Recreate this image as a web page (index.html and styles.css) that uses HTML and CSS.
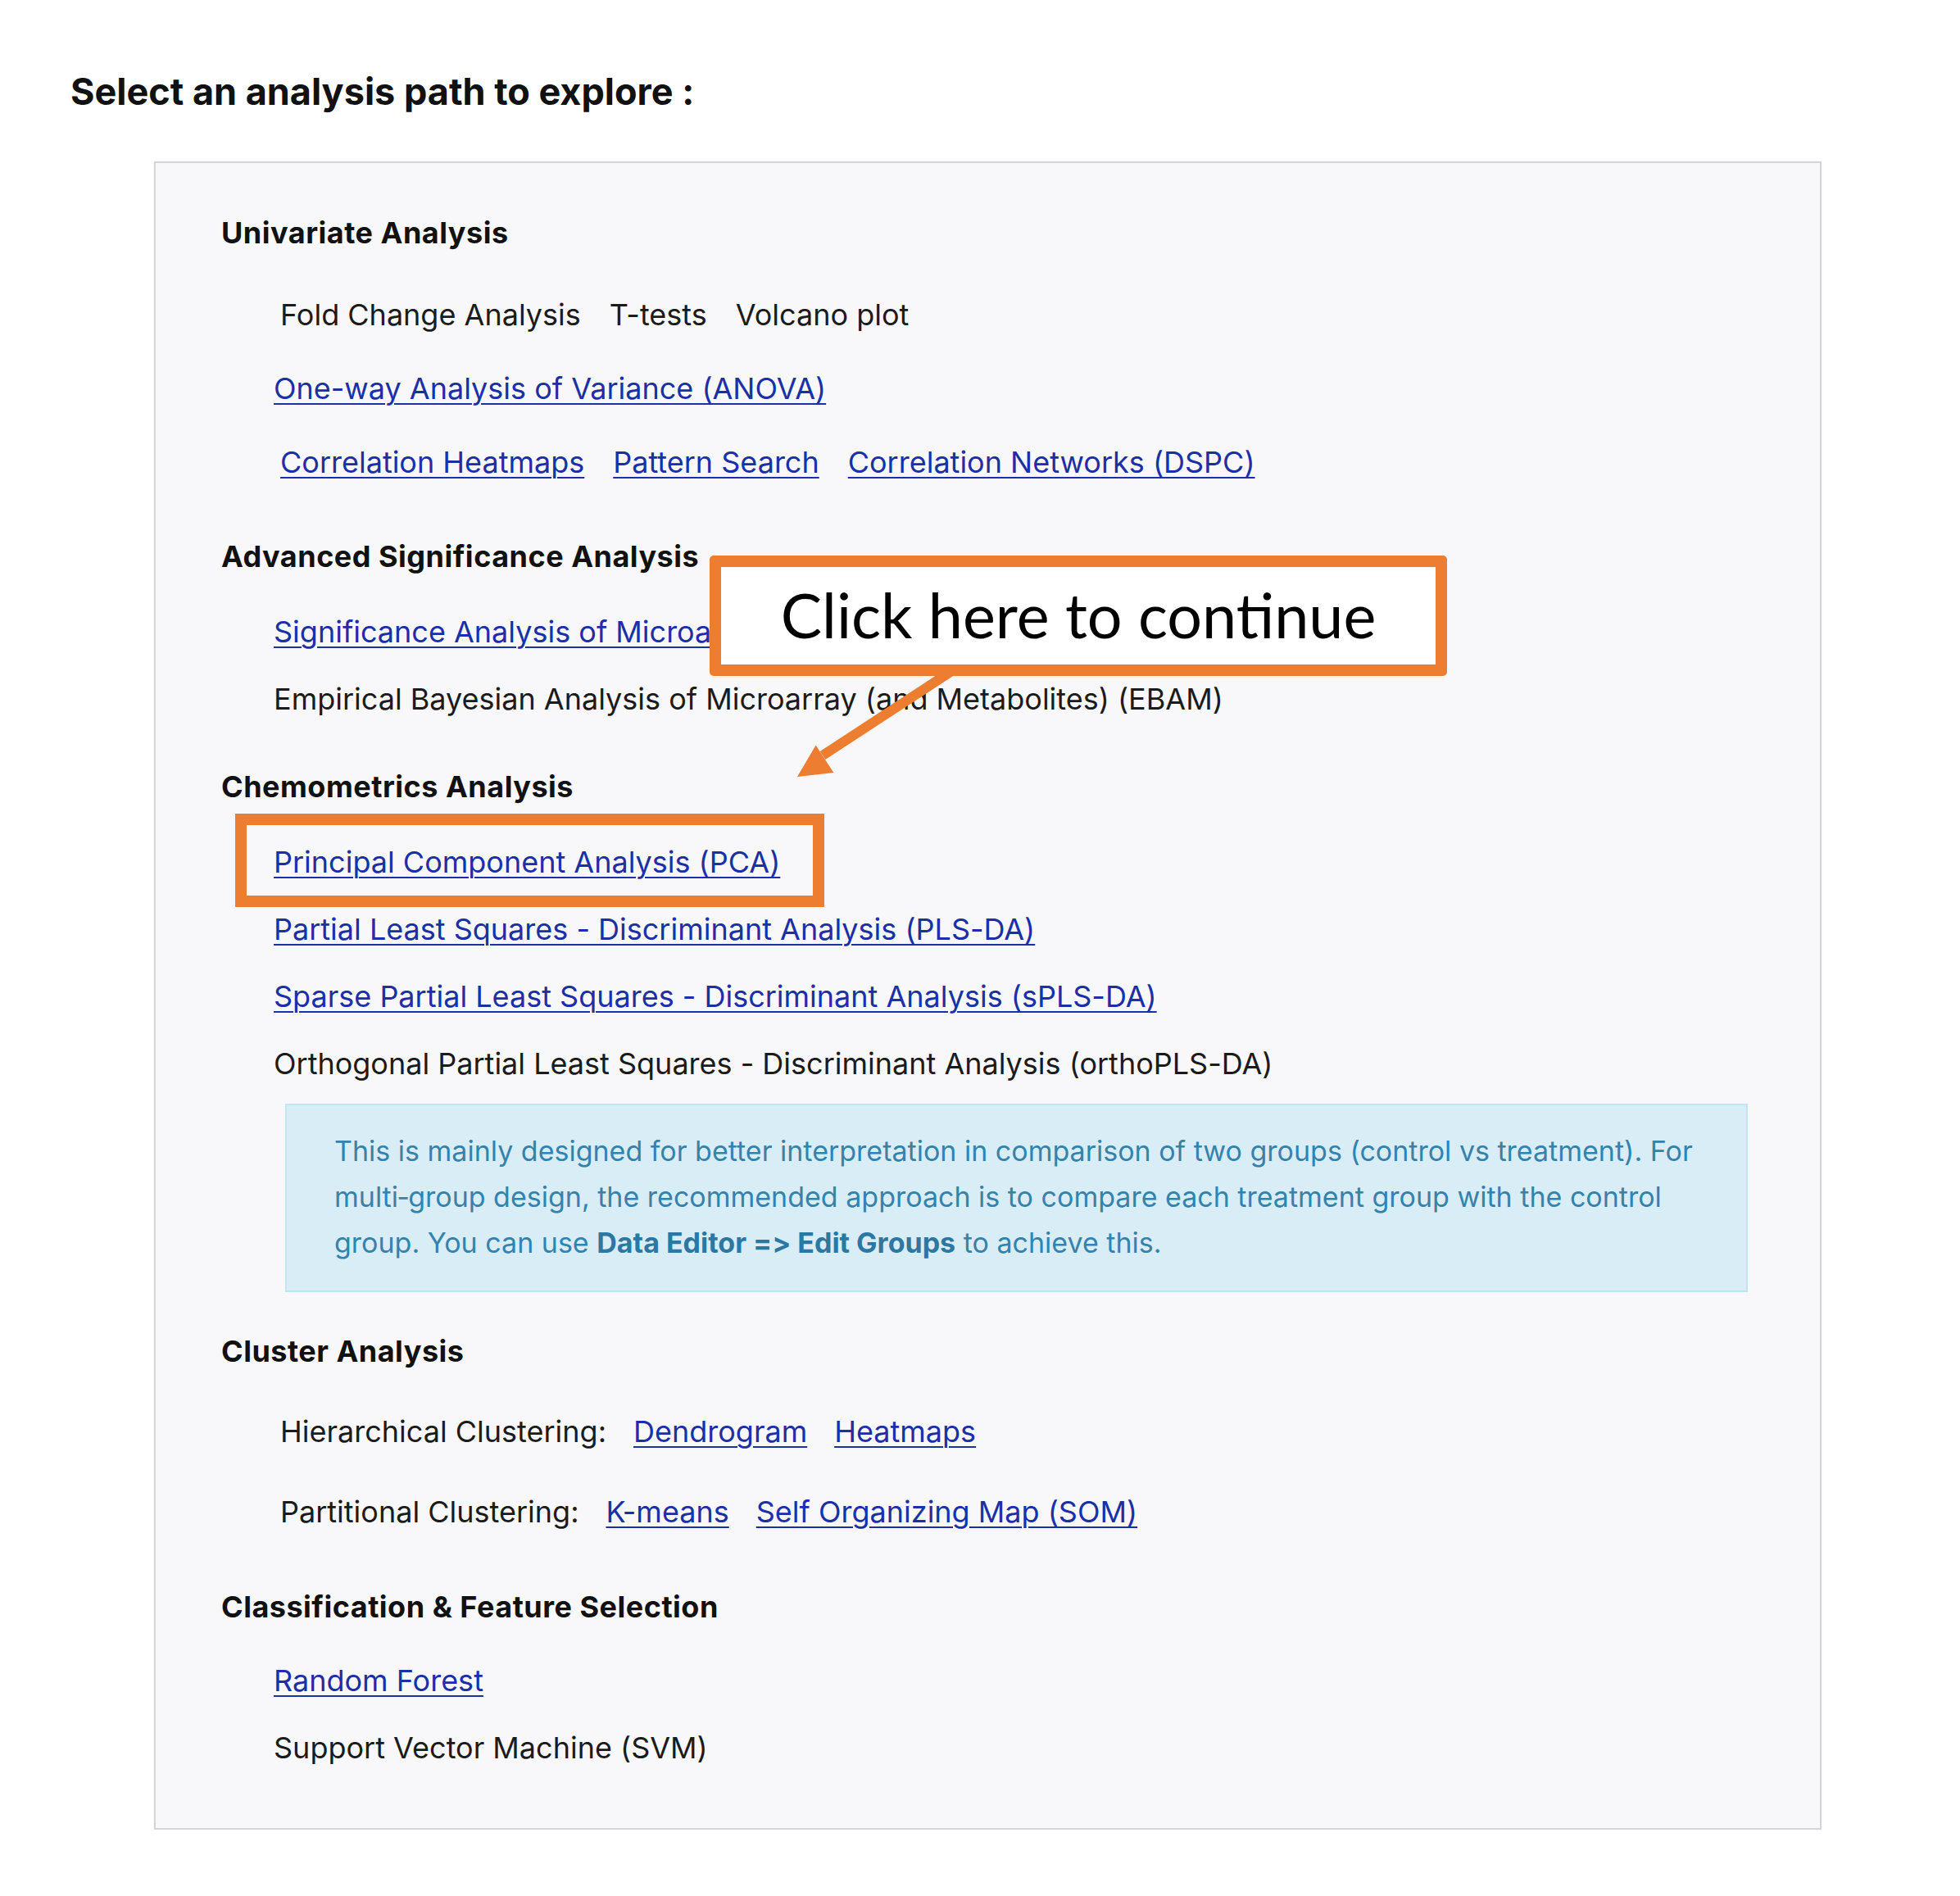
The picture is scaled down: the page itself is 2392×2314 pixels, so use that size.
FILE: index.html
```html
<!DOCTYPE html>
<html lang="en">
<head>
<meta charset="utf-8">
<title>Select an analysis path</title>
<link rel="stylesheet" href="styles.css">
</head>
<body>
<div class="page">
  <h1 class="title">Select an analysis path to explore :</h1>

  <div class="panel">
    <section class="sec sec-uni">
      <h2 class="sec-title">Univariate Analysis</h2>
      <div class="trow trow-first">
        <span class="cell">Fold Change Analysis</span>
        <span class="cell">T-tests</span>
        <span class="cell">Volcano plot</span>
      </div>
      <div class="item item-tight"><a href="#">One-way Analysis of Variance (ANOVA)</a></div>
      <div class="trow trow-next">
        <a class="cell" href="#">Correlation Heatmaps</a>
        <a class="cell" href="#">Pattern Search</a>
        <a class="cell" href="#">Correlation Networks (DSPC)</a>
      </div>
    </section>

    <section class="sec sec-adv">
      <h2 class="sec-title">Advanced Significance Analysis</h2>
      <div class="item item-first"><a href="#">Significance Analysis of Microarray (and Metabolites) (SAM)</a></div>
      <div class="item">Empirical Bayesian Analysis of Microarray (and Metabolites) (EBAM)</div>
    </section>

    <section class="sec sec-chemo">
      <h2 class="sec-title">Chemometrics Analysis</h2>
      <div class="item item-first"><a href="#">Principal Component Analysis (PCA)</a></div>
      <div class="item"><a href="#">Partial Least Squares - Discriminant Analysis (PLS-DA)</a></div>
      <div class="item"><a href="#">Sparse Partial Least Squares - Discriminant Analysis (sPLS-DA)</a></div>
      <div class="item">Orthogonal Partial Least Squares - Discriminant Analysis (orthoPLS-DA)</div>
      <div class="info">This is mainly designed for better interpretation in comparison of two groups (control vs treatment). For multi&#8209;group design, the recommended approach is to compare each treatment group with the control group. You can use <strong>Data Editor =&gt; Edit Groups</strong> to achieve this.</div>
    </section>

    <section class="sec sec-cluster">
      <h2 class="sec-title">Cluster Analysis</h2>
      <div class="trow trow-cl trow-cl-first">
        <span class="cell">Hierarchical Clustering:</span>
        <a class="cell" href="#">Dendrogram</a>
        <a class="cell" href="#">Heatmaps</a>
      </div>
      <div class="trow trow-cl">
        <span class="cell">Partitional Clustering:</span>
        <a class="cell" href="#">K-means</a>
        <a class="cell" href="#">Self Organizing Map (SOM)</a>
      </div>
    </section>

    <section class="sec sec-class">
      <h2 class="sec-title">Classification &amp; Feature Selection</h2>
      <div class="item item-first-b"><a href="#">Random Forest</a></div>
      <div class="item item-last">Support Vector Machine (SVM)</div>
    </section>
  </div>

  <div class="highlight"></div>
  <svg class="arrow" width="2392" height="1100" viewBox="0 0 2392 1100" aria-hidden="true">
    <line x1="1163" y1="818" x2="1004" y2="922" stroke="#ED7D31" stroke-width="12" />
    <polygon points="973,948 995.6,909.4 1017.4,943" fill="#ED7D31" />
  </svg>
  <div class="callout">Click here to continue</div>
</div>
</body>
</html>
```

FILE: styles.css
```css
* { box-sizing: border-box; }

html, body {
  margin: 0;
  padding: 0;
  background: #ffffff;
}

body {
  font-family: Inter, "Liberation Sans", Arial, sans-serif;
  font-feature-settings: "calt" 0;
  color: #1b1b1b;
  width: 2392px;
  min-height: 2314px;
}

.page {
  position: relative;
  padding-top: 85px;
  padding-bottom: 40px;
}

.title {
  margin: 0;
  padding-left: 86px;
  font-size: 45px;
  line-height: 54px;
  font-weight: 700;
  color: #111111;
}

.panel {
  margin-top: 58px;
  margin-left: 188px;
  width: 2035px;
  background: #f8f8fa;
  border: 2px solid #d5d5d7;
  box-shadow: 0 0 2px rgba(0, 0, 0, 0.08);
  padding: 60px 0 73px 80px;
}

.sec-title {
  margin: 0;
  font-size: 36px;
  line-height: 50px;
  font-weight: 700;
  letter-spacing: 0.5px;
  color: #111111;
}

.item,
.trow {
  font-size: 36px;
  line-height: 50px;
  padding-left: 64px;
  margin-top: 32px;
  white-space: nowrap;
}

.trow {
  display: flex;
  gap: 35px;
  padding-left: 72px;
}

.item-first { margin-top: 42px; }
.item-first-b { margin-top: 40px; }
.item-tight { margin-top: 40px; }
.trow-first { margin-top: 50px; }
.trow-next { margin-top: 40px; }

.trow-cl { gap: 33px; margin-top: 48px; }

a {
  color: #1b2fa6;
  text-decoration: underline;
  text-underline-offset: 5px;
  text-decoration-thickness: 2px;
}

.sec-adv { margin-top: 65px; }
.sec-chemo { margin-top: 57px; }
.sec-cluster { margin-top: 47px; }
.sec-class { margin-top: 66px; }

.info {
  margin: 24px 88px 0 78px;
  background: #d9edf7;
  border: 2px solid #bfe6f1;
  color: #3583ad;
  font-size: 34px;
  line-height: 56px;
  padding: 28px 60px 30px 58px;
}

.info strong {
  font-weight: 700;
  color: #2e77a2;
}

/* annotation overlays */
.highlight {
  position: absolute;
  left: 287px;
  top: 993px;
  width: 719px;
  height: 114px;
  border: 14px solid #ED7D31;
}

.arrow {
  position: absolute;
  left: 0;
  top: 0;
  pointer-events: none;
}

.callout {
  position: absolute;
  left: 866px;
  top: 678px;
  width: 900px;
  height: 147px;
  border: 14px solid #ED7D31;
  border-radius: 5px;
  background: #ffffff;
  display: flex;
  align-items: center;
  justify-content: center;
  font-family: Lato, "Open Sans", sans-serif;
  font-size: 75.5px;
  color: #000000;
  padding-bottom: 4px;
}
```
